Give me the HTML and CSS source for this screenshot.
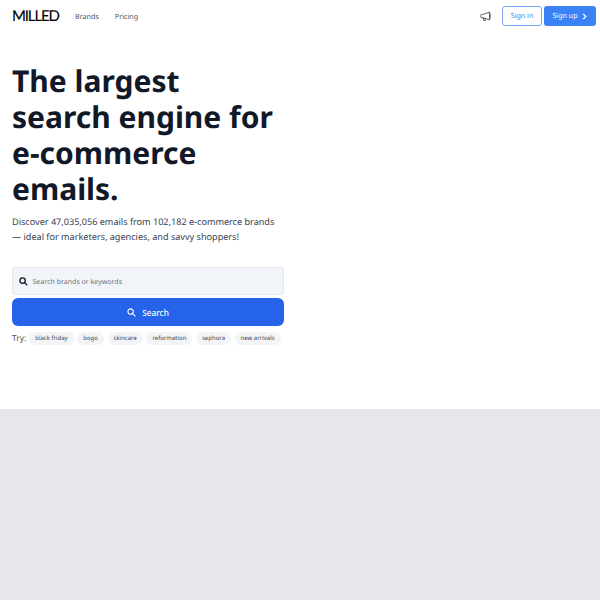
FILE: index.html
```html
<!DOCTYPE html>
<html lang="en">
<head>
    <meta charset="UTF-8">
    <title>Milled</title>
    <link rel="stylesheet" href="styles.css">
</head>
<body>
<header class="nav">
    <div class="nav-left">
        <a class="logo">MILLED</a>
        <a class="nav-link">Brands</a>
        <a class="nav-link">Pricing</a>
    </div>
    <div class="nav-right">
        <svg class="announce" width="11" height="11" viewBox="0 0 24 24" fill="none" stroke="#4b5563" stroke-width="2" stroke-linecap="round" stroke-linejoin="round">
            <path d="M20 3L8 7H4a2 2 0 0 0-2 2v4a2 2 0 0 0 2 2h4l12 4z"/>
            <path d="M20 3c1.500 1 2.500 4 2.500 8s-1 7-2.500 8"/>
            <path d="M7 15l1.500 6h3.500l-1-5"/>
        </svg>
        <a class="btn-signin">Sign in</a>
        <a class="btn-signup">Sign up
            <svg width="7" height="7" viewBox="0 0 8 8" fill="none" stroke="#fff" stroke-width="1.500"><path d="M2.500 1l3 3-3 3"/></svg>
        </a>
    </div>
</header>
<section class="hero">
    <h1>The largest<br>search engine for<br>e-commerce<br>emails.</h1>
    <p class="lead">Discover 47,035,056 emails from 102,182 e-commerce brands — ideal for marketers, agencies, and savvy shoppers!</p>
    <div class="search-input">
        <svg width="9" height="9" viewBox="0 0 10 10" fill="none" stroke="#111827" stroke-width="1.500"><circle cx="4" cy="4" r="3"/><path d="M6.300 6.300L9.300 9.300"/></svg>
        <span>Search brands or keywords</span>
    </div>
    <button class="search-btn">
        <svg width="9" height="9" viewBox="0 0 10 10" fill="none" stroke="#fff" stroke-width="1.200"><circle cx="4" cy="4" r="3"/><path d="M6.300 6.300L9.300 9.300"/></svg>
        Search
    </button>
    <div class="try">
        <span class="try-label">Try:</span>
        <a class="tag">black friday</a>
        <a class="tag">bogo</a>
        <a class="tag">skincare</a>
        <a class="tag">reformation</a>
        <a class="tag">sephora</a>
        <a class="tag">new arrivals</a>
    </div>
</section>
<div class="gallery"></div>
</body>
</html>
```
FILE: styles.css
```css
*{
    box-sizing: border-box;
}
html, body{
    margin: 0;
    height: 100%;
}
body{
    font-family: "Noto Sans", sans-serif;
    background: #fff;
    color: #111827;
    display: flex;
    flex-direction: column;
    text-rendering: geometricPrecision;
}
.nav{
    height: 32px;
    padding: 0 4px 0 12px;
    display: flex;
    justify-content: space-between;
    align-items: center;
}
.nav-left{
    display: flex;
    align-items: center;
}
.logo{
    font-family: "Lato", sans-serif;
    font-size: 15px;
    color: #000;
    width: 63px;
    letter-spacing: -1.150px;
    -webkit-text-stroke: 0.1px #000;
}
.nav-link{
    font-size: 7.200px;
    padding-top: 1px;
    color: #4b5563;
    margin-right: 16px;
}
.nav-right{
    display: flex;
    align-items: center;
}
.announce{
    margin-right: 11px;
}
.btn-signin, .btn-signup{
    height: 20px;
    border-radius: 3px;
    font-size: 7.100px;
    display: flex;
    align-items: center;
    justify-content: center;
}
.btn-signin{
    width: 40px;
    border: 1px solid #7aa7f7;
    color: #3b82f6;
    margin-right: 2px;
}
.btn-signup{
    width: 52px;
    background: #3b82f6;
    color: #fff;
    gap: 3px;
}
.hero{
    height: 377px;
    padding: 31px 12px 0;
}
h1{
    margin: 0;
    font-size: 30px;
    line-height: 36px;
    font-weight: 700;
}
.lead{
    margin: 7px 0 0;
    width: 272px;
    font-size: 9.100px;
    line-height: 15px;
    color: #374151;
}
.search-input{
    margin-top: 23px;
    width: 272px;
    height: 28px;
    background: #f1f5f9;
    border: 1px solid #e5e7eb;
    border-radius: 3px;
    padding-left: 6px;
    display: flex;
    align-items: center;
    gap: 4.500px;
    font-size: 7.050px;
    color: #6b7280;
}
.search-input span{
    padding-top: 1px;
}
.search-btn{
    margin-top: 3px;
    width: 272px;
    height: 28px;
    background: #2563eb;
    border: 0;
    border-radius: 6px;
    color: #fff;
    font-family: inherit;
    font-size: 8.300px;
    font-weight: 500;
    display: flex;
    align-items: center;
    justify-content: center;
    gap: 6px;
}
.try{
    margin-top: 6px;
    display: flex;
    align-items: center;
}
.try-label{
    font-size: 8.400px;
    color: #4b5563;
    margin-right: 3px;
}
.tag{
    font-size: 6px;
    line-height: 13px;
    padding: 0 6px;
    border-radius: 7px;
    background: #f3f4f6;
    color: #374151;
    margin-right: 3.600px;
}
.gallery{
    flex: 1;
    background: #e5e7eb;
}
```
